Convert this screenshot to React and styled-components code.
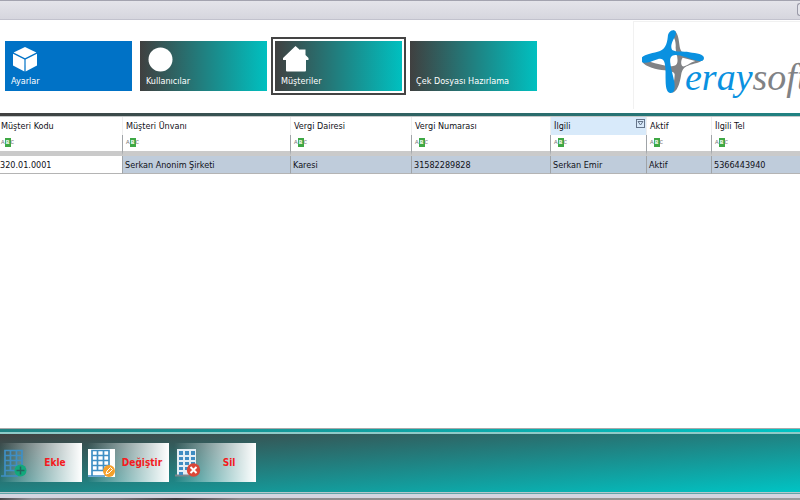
import React, { useState } from 'react';
import styled, { createGlobalStyle } from 'styled-components';

const tiles = [
    { id: 'ayarlar', label: 'Ayarlar', icon: 'cube' },
    { id: 'kullanicilar', label: 'Kullanıcılar', icon: 'circle' },
    { id: 'musteriler', label: 'Müşteriler', icon: 'home' },
    { id: 'cek', label: 'Çek Dosyası Hazırlama' },
];

const columns = [
    { key: 'kod', title: 'Müşteri Kodu', width: 123 },
    { key: 'unvan', title: 'Müşteri Ünvanı', width: 168 },
    { key: 'daire', title: 'Vergi Dairesi', width: 121 },
    { key: 'numara', title: 'Vergi Numarası', width: 139 },
    { key: 'ilgili', title: 'İlgili', width: 96 },
    { key: 'aktif', title: 'Aktif', width: 65 },
    { key: 'tel', title: 'İlgili Tel' },
];

const rows = [
    {
        kod: '320.01.0001',
        unvan: 'Serkan Anonim Şirketi',
        daire: 'Karesi',
        numara: '31582289828',
        ilgili: 'Serkan Emir',
        aktif: 'Aktif',
        tel: '5366443940',
    },
];

function TileIcon({ name }) {
    if (name === 'cube') {
        return (
            <svg width="28" height="26" viewBox="0 0 28 26" fill="white">
                <path d="M14 1L25.400 6.600L14 12.300L2.600 6.600Z" />
                <path d="M2 7.700L13.400 13.400V25.500L2 19.500Z" />
                <path d="M26 7.700L14.600 13.400V25.500L26 19.500Z" />
            </svg>
        );
    }
    if (name === 'circle') {
        return (
            <svg width="28" height="26" viewBox="0 0 28 26" fill="white">
                <circle cx="14.500" cy="13.500" r="12" />
            </svg>
        );
    }
    if (name === 'home') {
        return (
            <svg width="28" height="26" viewBox="0 0 28 26" fill="white">
                <path d="M14.500 0L19 4V3.500H24.500V9L27.500 12V14H25V24.500Q25 25.500 24 25.500H6Q5 25.500 5 24.500V14H2V12Z" />
            </svg>
        );
    }
    return null;
}

function BuildingIcon({ badge }) {
    return (
        <svg width="27" height="28" viewBox="0 0 27 28" fill="none">
            {badge === 'edit' && <rect width="27" height="28" fill="white" />}
            {badge === 'delete' ? (
                <>
                    <path d="M2 0H21V26H2Z" fill="#e4eef4" />
                    <path d="M0 26.500H14" stroke="#7b868c" strokeWidth="2" />
                    <path d="M4 2H8V6H4Z M10 2H14V6H10Z M16 2H20V6H16Z M4 8H8V11H4Z M10 8H14V11H10Z M16 8H20V11H16Z M4 13H8V16H4Z M10 13H14V16H10Z M16 13H20V16H16Z M4 18H8V21H4Z M10 18H14V21H10Z M4 23H8V26H4Z" fill="#3f8cc2" />
                </>
            ) : (
                <path d="M4 27V1.500H21V27 M0 27H17 M4 6.500H21 M4 11.500H21 M4 16.500H21 M4 21.500H21 M9.500 1V22 M15.500 1V22" stroke="#3f8fc4" strokeWidth="1.700" />
            )}
            {badge === 'add' && (
                <>
                    <circle cx="19.500" cy="21.500" r="6" fill="#12a87c" />
                    <path d="M19.500 17.500V25.500 M15.500 21.500H23.500" stroke="#24665d" strokeWidth="1.500" />
                </>
            )}
            {badge === 'edit' && (
                <>
                    <circle cx="21" cy="22" r="6" fill="#f5a02b" />
                    <path d="M18 25L19 22L22.500 18.500L24.500 20.500L21 24Z" stroke="white" strokeWidth="1" />
                </>
            )}
            {badge === 'delete' && (
                <>
                    <circle cx="18.500" cy="21" r="6.700" fill="#db4637" />
                    <path d="M15.500 18L21.500 24M21.500 18L15.500 24" stroke="white" strokeWidth="2" />
                </>
            )}
        </svg>
    );
}

function Logo() {
    return (
        <LogoBox>
            <svg width="64" height="68" viewBox="12 12 192 204">
                <path
                    fill="#808285"
                    fillRule="evenodd"
                    d="M106 16C118 20 122 38 124 58C126 76 130 84 150 96L196 103C190 113 166 116 150 122C138 126 133 134 130 146C127 164 122 196 104 203L100 196C106 184 110 162 110 148C108 140 96 138 80 136C56 134 20 126 11 108L22 106C46 114 76 122 98 124C108 124 116 122 118 112C121 96 112 80 113 66C114 52 110 36 100 30Z M134 98C128 106 128 120 134 124C142 126 154 114 172 108Z"
                />
                <path
                    fill="#0a91e0"
                    fillRule="evenodd"
                    d="M90 30C93 17 106 12 112 18C118 26 108 38 104 48C99 60 98 70 104 76C114 82 134 78 154 82C176 85 198 88 198 99C198 110 184 110 172 106C150 100 132 90 112 90C98 91 95 100 97 114C99 134 106 152 109 172C112 192 108 205 98 204C86 203 84 188 83 174C82 152 84 130 80 114C76 98 64 100 50 106C36 112 10 120 9 104C10 88 44 86 66 78C86 70 88 48 90 30Z"
                />
            </svg>
            <LogoText><b>eray</b>soft</LogoText>
        </LogoBox>
    );
}

function App() {
    const [selected, setSelected] = useState('musteriler');

    return (
        <Page>
            <GlobalStyle />
            <TitleBar><WindowButton aria-label="Pencere" /></TitleBar>
            <Header>
                <Tiles>
                    {tiles.map((tile) => (
                        <Tile
                            key={tile.id}
                            $plain={tile.id === 'ayarlar'}
                            $selected={tile.id === selected}
                            onClick={() => setSelected(tile.id)}
                        >
                            <TileIcon name={tile.icon} />
                            <span>{tile.label}</span>
                        </Tile>
                    ))}
                </Tiles>
                <Logo />
            </Header>
            <GridFrame>
                <GridArea>
                    <Table>
                        <colgroup>
                            {columns.map((c) => <col key={c.key} width={c.width} />)}
                        </colgroup>
                        <thead>
                            <tr>
                                {columns.map((c) => (
                                    <HeadCell key={c.key} $active={c.key === 'ilgili'}>
                                        <HeadContent>
                                            {c.title}
                                            {c.key === 'ilgili' && (
                                                <FilterButton aria-label="Filtre">
                                                    <svg width="9" height="9" viewBox="0 0 9 9" fill="none" stroke="#65758a">
                                                        <rect x="0.500" y="0.500" width="8" height="8" />
                                                        <path d="M2 2.500H7L4.500 6Z" />
                                                    </svg>
                                                </FilterButton>
                                            )}
                                        </HeadContent>
                                    </HeadCell>
                                ))}
                            </tr>
                            <tr>
                                {columns.map((c) => (
                                    <FilterCell key={c.key}>
                                        <MatchButton>A<b>B</b>C</MatchButton>
                                    </FilterCell>
                                ))}
                            </tr>
                        </thead>
                        <tbody>
                            {rows.map((row) => (
                                <tr key={row.kod}>
                                    {columns.map((c, i) => (
                                        <Cell key={c.key} $focused={i === 0}>{row[c.key]}</Cell>
                                    ))}
                                </tr>
                            ))}
                        </tbody>
                    </Table>
                </GridArea>
            </GridFrame>
            <Footer>
                <ActionButton><BuildingIcon badge="add" /><span>Ekle</span></ActionButton>
                <ActionButton><BuildingIcon badge="edit" /><span>Değiştir</span></ActionButton>
                <ActionButton><BuildingIcon badge="delete" /><span>Sil</span></ActionButton>
            </Footer>
            <WindowEdge />
            <Backdrop />
        </Page>
    );
}

export default App;

const GlobalStyle = createGlobalStyle`
    * {
        box-sizing: border-box;
    }

    body {
        margin: 0;
        background: white;
        font-family: 'DejaVu Sans Condensed', 'DejaVu Sans', sans-serif;
        font-size: 9px;
        color: #101018;
    }

    button {
        font: inherit;
        border: none;
        padding: 0;
        cursor: pointer;
    }

    svg {
        flex: none;
    }
`;

const Page = styled.div`
    display: flex;
    flex-direction: column;
    min-height: 100vh;
    overflow: hidden;
`;

const TitleBar = styled.div`
    display: flex;
    justify-content: flex-end;
    height: 20px;
    padding-top: 2px;
    border-top: 1px solid #a3a3af;
    border-bottom: 1px solid #c2c2cd;
    background: linear-gradient(#e4e4ea, #d6d6de);
`;

const WindowButton = styled.button`
    width: 3px;
    height: 13px;
    background: #e4e4ea;
    border: 1px solid #9a9aa8;
    border-right: none;
    border-radius: 3px 0 0 3px;
`;

const Header = styled.header`
    display: flex;
    justify-content: space-between;
    height: 93px;
    padding-left: 5px;
`;

const Tiles = styled.nav`
    display: flex;
    gap: 8px;
    padding-top: 21px;
`;

const Tile = styled.button`
    display: flex;
    flex-direction: column;
    justify-content: flex-end;
    align-items: flex-start;
    gap: 3px;
    width: 127px;
    height: 50px;
    padding: 0 6px 3px;
    color: white;
    white-space: nowrap;
    background: ${({ $plain }) => $plain ? '#0072c6' : 'linear-gradient(to right, #404040, #00c0c0)'};
    outline: ${({ $selected }) => $selected ? '2px solid #444' : 'none'};
    outline-offset: 2px;

    span {
        line-height: 13px;
    }
`;

const LogoBox = styled.div`
    display: flex;
    flex: none;
    width: 167px;
    height: 88px;
    padding: 7px 0 0 8px;
    margin-top: 1px;
    border-left: 1px solid #f1f1f1;
    border-top: 1px solid #f1f1f1;
    overflow: hidden;
`;

const LogoText = styled.div`
    margin: 24px 0 0 -21px;
    font-family: 'Liberation Serif', serif;
    font-size: 38px;
    line-height: 48px;
    font-style: italic;
    color: #808285;

    b {
        font-weight: normal;
        color: #0a91e0;
    }
`;

const GridFrame = styled.main`
    display: flex;
    flex: 1;
    padding: 3px 0;
    background: linear-gradient(to bottom right, #404040, #00c4c4);
`;

const GridArea = styled.div`
    flex: 1;
    background: white;
    border-top: 1px solid #c4c8c8;
    border-bottom: 1px solid #a9a9a9;
`;

const Table = styled.table`
    width: 100%;
    table-layout: fixed;
    border-collapse: separate;
    border-spacing: 0;
    line-height: 14px;

    th, td {
        padding: 0 0 0 2px;
        border-right: 1px solid #a0a4a8;
    }

    th:first-child, td:first-child {
        padding-left: 0;
    }

    th:last-child, td:last-child {
        border-right: none;
    }
`;

const HeadCell = styled.th`
    height: 18px;
    font-weight: normal;
    text-align: left;
    background: ${({ $active }) => $active ? '#d8eafa' : 'white'};

    && {
        border-right-color: #eeeeee;
    }
`;

const HeadContent = styled.div`
    display: flex;
    justify-content: space-between;
    align-items: center;
    padding: 0 1px;
`;

const FilterButton = styled.button`
    display: flex;
    align-self: flex-start;
    background: none;
`;

const FilterCell = styled.td`
    height: 21px;
    vertical-align: top;
    border-bottom: 5px solid #cacaca;
`;

const MatchButton = styled.button`
    display: flex;
    align-items: center;
    margin: 3px 0 0 1px;
    background: none;
    font-family: 'Liberation Mono', monospace;
    font-size: 6px;
    line-height: 9px;
    color: #777;

    b {
        width: 6px;
        height: 9px;
        background: #3fa845;
        color: white;
        text-align: center;
    }
`;

const Cell = styled.td`
    height: 18px;
    border-bottom: 1px solid #b4b4b4;
    background: ${({ $focused }) => $focused ? 'white' : '#bfccdb'};
`;

const Footer = styled.footer`
    display: flex;
    gap: 5px;
    height: 61px;
    padding-top: 9px;
    border-top: 2px solid #8fcac8;
    border-bottom: 1px solid #b5c9cc;
    background: linear-gradient(to bottom right, #404040, #00c4c4);
`;

const ActionButton = styled.button`
    display: flex;
    align-items: center;
    height: 39px;
    width: 82px;
    padding-left: 1px;
    background: linear-gradient(to right, rgba(255, 255, 255, 0), #ffffff);
    color: #f41a20;
    font-size: 10px;
    font-weight: bold;

    span {
        flex: 1;
        text-align: center;
    }
`;

const WindowEdge = styled.div`
    height: 5px;
    border-top: 1px solid #5fa3a8;
    background: #d3d5e0;
`;

const Backdrop = styled.div`
    height: 2px;
    background: linear-gradient(to right, #4a484c, #8f8d92 4%, #77757a 15%, #3c3a3e 22%, #8c8a8e 30%, #96928f 72%, #9a9b9e);
`;
